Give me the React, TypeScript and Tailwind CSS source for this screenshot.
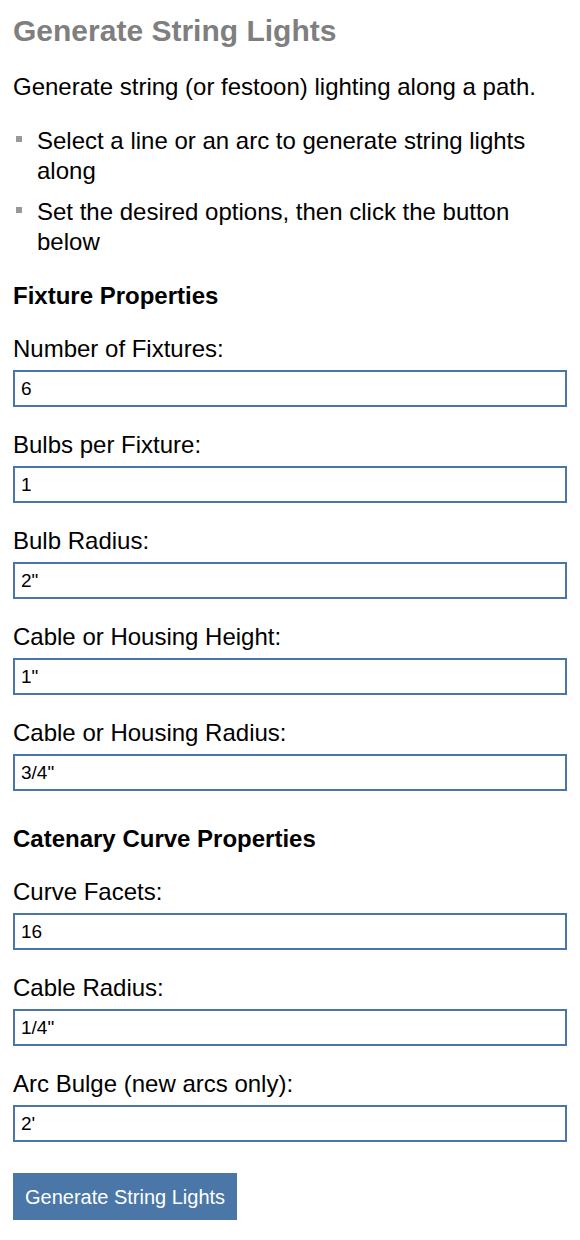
const fixtureFields = [
  { label: 'Number of Fixtures:', value: '6' },
  { label: 'Bulbs per Fixture:', value: '1' },
  { label: 'Bulb Radius:', value: '2"' },
  { label: 'Cable or Housing Height:', value: '1"' },
  { label: 'Cable or Housing Radius:', value: '3/4"' },
];

const curveFields = [
  { label: 'Curve Facets:', value: '16' },
  { label: 'Cable Radius:', value: '1/4"' },
  { label: 'Arc Bulge (new arcs only):', value: "2'" },
];

function Field({ label, value }: { label: string; value: string }) {
  return (
    <div className="mt-[23px]">
      <label className="block text-[24px] leading-[30px]">{label}</label>
      <input
        defaultValue={value}
        className="mt-[6px] block h-[37px] w-full rounded-none border-2 border-[#4a75a9] bg-white px-[6px] text-[19px] text-black outline-none"
      />
    </div>
  );
}

export default function App() {
  return (
    <div className="min-h-[1240px] bg-white px-[13px] pt-[13px] pb-5 font-['Liberation_Sans',Arial,sans-serif] text-black">
      <h1 className="text-[30px] leading-[36px] font-bold text-[#7f7f7f]">Generate String Lights</h1>
      <p className="mt-[23px] text-[24px] leading-[30px]">Generate string (or festoon) lighting along a path.</p>

      <ul className="mt-[24px] flex flex-col gap-[11px] text-[24px] leading-[30px]">
        <li className="flex">
          <span className="mt-[10px] ml-[3px] mr-[15px] h-[6px] w-[6px] shrink-0 bg-[#999]" />
          <span>Select a line or an arc to generate string lights along</span>
        </li>
        <li className="flex">
          <span className="mt-[10px] ml-[3px] mr-[15px] h-[6px] w-[6px] shrink-0 bg-[#999]" />
          <span>Set the desired options, then click the button below</span>
        </li>
      </ul>

      <h2 className="mt-[24px] text-[24px] leading-[30px] font-bold">Fixture Properties</h2>
      {fixtureFields.map((f) => (
        <Field key={f.label} {...f} />
      ))}

      <h2 className="mt-[33px] text-[24px] leading-[30px] font-bold">Catenary Curve Properties</h2>
      {curveFields.map((f) => (
        <Field key={f.label} {...f} />
      ))}

      <button className="mt-[31px] h-[47px] bg-[#4a76a8] px-[12px] text-[20px] text-white">
        Generate String Lights
      </button>
    </div>
  );
}
